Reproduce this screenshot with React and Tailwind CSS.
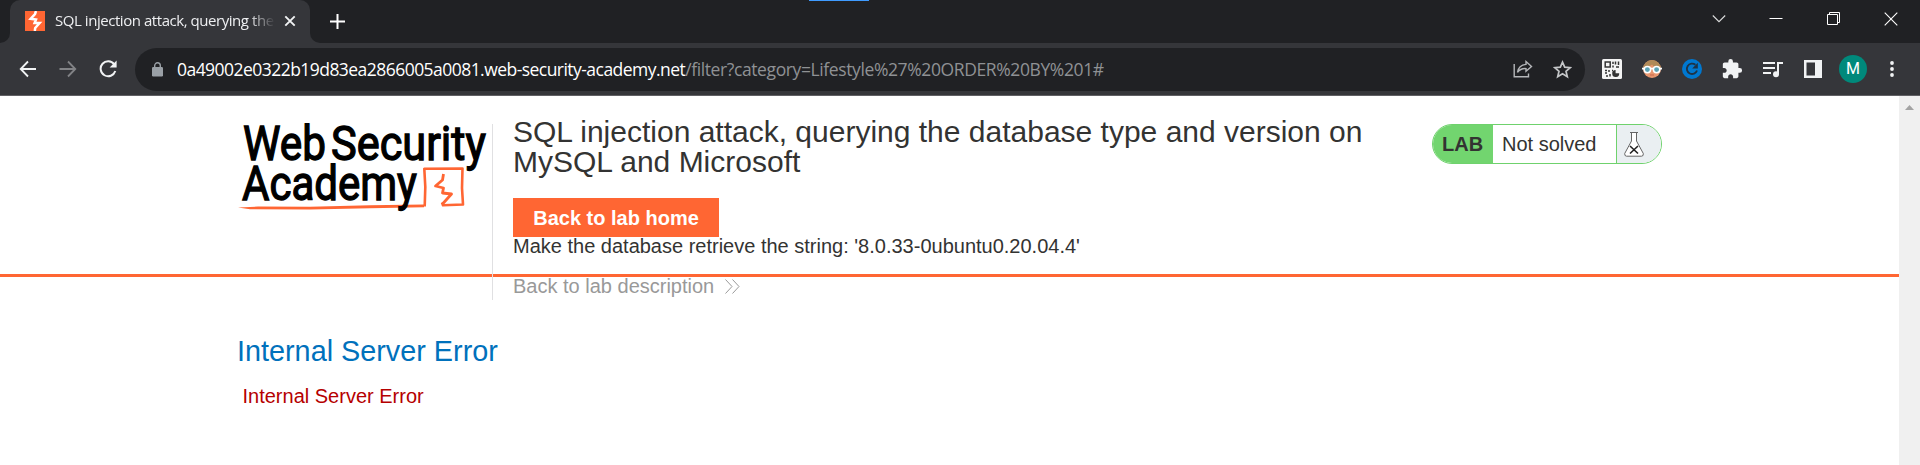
const chromeFont = "font-['Open_Sans','Noto_Sans',sans-serif]";

function Bolt({ className }) {
  return (
    <svg className={className} viewBox="0 0 20 20">
      <rect width="20" height="20" fill="#ff6633" />
      <path d="M11 0 L10 3 L5.6 7.8 L11 8.6 L9.6 12 L14.6 12 L10.2 17 L9.8 20" fill="none" stroke="#fff" strokeWidth="2.5" />
    </svg>
  );
}

function TabStrip() {
  return (
    <div className="flex h-[43px] bg-[#202124] justify-between">
      <div className="flex items-end">
        <div className="h-[43px] w-[10px] bg-[#35363a]">
          <div className="h-full rounded-br-[10px] bg-[#202124]" />
        </div>
        <div className="flex h-[43px] w-[300px] items-center rounded-t-[10px] bg-[#35363a] pl-[15px] pb-px">
          <Bolt className="h-5 w-5 shrink-0" />
          <div className={`${chromeFont} -mt-[2px] ml-[10px] w-[220px] overflow-hidden whitespace-nowrap text-[15px] leading-[22px] tracking-[-0.45px] text-[#eeeff1] [mask-image:linear-gradient(to_right,#000_88%,transparent)]`}>
            SQL injection attack, querying the
          </div>
          <svg className="ml-[9px] h-3 w-3" viewBox="0 0 12 12" stroke="#f1f3f4" strokeWidth="1.9">
            <path d="M1.3 1.3 L10.7 10.7 M10.7 1.3 L1.3 10.7" />
          </svg>
        </div>
        <div className="h-[43px] w-[10px] bg-[#35363a]">
          <div className="h-full rounded-bl-[10px] bg-[#202124]" />
        </div>
        <svg className="ml-[10px] mb-[14px] h-[15px] w-[15px]" viewBox="0 0 15 15" stroke="#fff" strokeWidth="2">
          <path d="M7.5 0 V15 M0 7.5 H15" />
        </svg>
      </div>
      <div className="flex gap-[43.5px] pr-[22px] pt-[12px]">
        <svg className="h-[14px] w-[14px]" viewBox="0 0 14 14" fill="none" stroke="#dcdddd" strokeWidth="1.1">
          <path d="M0.8 3.5 L7 9.7 L13.2 3.5" />
        </svg>
        <svg className="h-[14px] w-[14px]" viewBox="0 0 14 14" fill="none" stroke="#fff">
          <path d="M0.5 6.5 H13.5" />
        </svg>
        <svg className="h-[14px] w-[14px]" viewBox="0 0 14 14" fill="none" stroke="#fff">
          <path d="M0.5 2.5 H10.5 V12.5 H0.5 Z M2.5 2.5 V0.5 H12.5 V10.5 H10.5" />
        </svg>
        <svg className="h-[14px] w-[14px]" viewBox="0 0 14 14" fill="none" stroke="#fff" strokeWidth="1.1">
          <path d="M0.7 0.7 L13.3 13.3 M13.3 0.7 L0.7 13.3" />
        </svg>
      </div>
    </div>
  );
}

function QrIcon() {
  return (
    <svg className="h-5 w-5" viewBox="0 0 20 20">
      <rect width="20" height="20" rx="1.5" fill="#f4f4f4" />
      <g fill="none" stroke="#333" strokeWidth="1.5">
        <rect x="3.2" y="3" width="5" height="5" />
        <path d="M11 2.8 V5 M11 6.5 V8.5 M13.5 2.5 V5.500 M14 8 H17 M16.5 2.5 V6 M3 11.500 H5 M7 11 V13 M3 14 H5 M4 17 H6 M8 15 V17.500 M10 11.500 H11" />
      </g>
      <path d="M13.600 11 V14.200 H17.200 A3.500 3.500 0 1 1 13.600 11 Z" fill="#333" />
    </svg>
  );
}

function FaceIcon() {
  return (
    <svg className="h-5 w-5" viewBox="0 0 20 20">
      <circle cx="10" cy="10" r="9" fill="#e8976f" />
      <path d="M1 10 A9 9 0 0 1 19 10 L13 9 L10 5.500 L5 9 Z" fill="#b08a58" />
      <path d="M0 9.600 H20" stroke="#fff" strokeWidth="1.800" />
      <circle cx="5.4" cy="10.6" r="3.2" fill="#5aa3b5" stroke="#fff" strokeWidth="1.5" />
      <circle cx="14.6" cy="10.6" r="3.2" fill="#5aa3b5" stroke="#fff" strokeWidth="1.5" />
      <path d="M8 16 H12" stroke="#c9674a" />
    </svg>
  );
}

function Toolbar() {
  return (
    <div className="flex h-[53px] items-center border-b border-[#606064] bg-[#35363a] pl-[19px]">
      <svg className="h-[18px] w-[18px]" viewBox="0 0 18 18" fill="none" stroke="#f1f3f4" strokeWidth="1.8">
        <path d="M17 9 H2 M9 1.5 L1.7 9 L9 16.5" />
      </svg>
      <svg className="ml-[22px] h-[18px] w-[18px]" viewBox="0 0 18 18" fill="none" stroke="#828386" strokeWidth="1.8">
        <path d="M0.5 9 H16 M9 1.5 L16.3 9 L9 16.5" />
      </svg>
      <svg className="ml-[22px] h-[18px] w-[18px]" viewBox="0 0 18 18" fill="none" stroke="#f1f3f4" strokeWidth="2">
        <path d="M15.2 4.3 A7.5 7.5 0 1 0 16.3 11" />
        <path d="M17.6 0.6 V7.6 H10.6 Z" fill="#f1f3f4" stroke="none" />
      </svg>
      <div className="ml-[18px] flex h-[43px] w-[1450px] items-center rounded-full bg-[#202124] pl-[17px] pr-[13px]">
        <svg className="h-[15px] w-[11px]" viewBox="0 0 11 15">
          <rect y="5" width="11" height="9.5" rx="1.2" fill="#9aa0a6" />
          <path d="M2.7 5.5 V3.6 A2.8 2.8 0 0 1 8.3 3.6 V5.5" fill="none" stroke="#9aa0a6" strokeWidth="1.4" />
        </svg>
        <div className={`${chromeFont} ml-[14px] flex-1 whitespace-nowrap text-[17.5px] leading-6 text-[#8f9194]`}>
          <span className="tracking-[-0.54px] text-white">0a49002e0322b19d83ea2866005a0081.web-security-academy.net</span>
          <span className="tracking-[-0.39px]">/filter?category=Lifestyle%27%20ORDER%20BY%201#</span>
        </div>
        <svg className="h-[18px] w-[20px]" viewBox="0 0 20 18" fill="none" stroke="#b4b6b9" strokeWidth="1.4">
          <path d="M1.2 4 V16.8 H15.5 V13.5" />
          <path d="M13 1.6 L18.5 6.5 L13 11.3 V8.6 Q7.5 8.2 4.5 12.4 Q5.6 5 13 4.4 Z" />
        </svg>
        <svg className="ml-[20px] h-[19px] w-[19px]" viewBox="0 0 19 19" fill="none" stroke="#c4c6c8" strokeWidth="1.7">
          <path d="M9.5 2.2 L11.7 7.2 L17.2 7.7 L13 11.3 L14.3 16.7 L9.5 13.8 L4.7 16.7 L6 11.3 L1.8 7.7 L7.3 7.2 Z" />
        </svg>
      </div>
      <div className="ml-[17px] flex items-center">
        <QrIcon />
        <div className="ml-5"><FaceIcon /></div>
        <svg className="ml-5 h-5 w-5" viewBox="0 0 20 20">
          <circle cx="10" cy="10" r="10" fill="#0078d0" />
          <path d="M13.4 5.8 A5.200 5.200 0 1 0 15 11.500" fill="none" stroke="#1d3346" strokeWidth="1.9" />
          <path d="M15.800 3.800 V9.400 H10.200 Z" fill="#1d3346" />
        </svg>
        <svg className="ml-[19px] h-[22px] w-[22px]" viewBox="0 0 24 24" fill="#f1f3f4">
          <path d="M20.5 11H19V7c0-1.1-.9-2-2-2h-4V3.5a2.5 2.5 0 0 0-5 0V5H4c-1.100 0-1.990.9-1.990 2v3.800H3.500c1.490 0 2.700 1.210 2.700 2.700s-1.210 2.700-2.700 2.700H2V20c0 1.100.9 2 2 2h3.800v-1.500c0-1.490 1.210-2.700 2.700-2.700 1.490 0 2.700 1.210 2.700 2.700V22H17c1.100 0 2-.9 2-2v-4h1.500a2.500 2.500 0 0 0 0-5z" />
        </svg>
        <svg className="ml-[20px] h-[17px] w-[20px]" viewBox="0 0 20 17">
          <path d="M0 2 H12 M0 7 H12 M0 12 H8" stroke="#f1f3f4" strokeWidth="2" />
          <path d="M15 13 V2 H20" fill="none" stroke="#f1f3f4" strokeWidth="2" />
          <circle cx="13" cy="13.200" r="3" fill="#f1f3f4" />
        </svg>
        <svg className="ml-[21px] h-[18px] w-[18px]" viewBox="0 0 18 18">
          <rect width="18" height="18" fill="#f1f3f4" />
          <rect x="2.500" y="2.500" width="8.500" height="13" fill="#35363a" />
        </svg>
        <div className="ml-[17px] flex h-7 w-7 items-center justify-center rounded-full bg-[#00897b] font-[Roboto,sans-serif] text-[16px] text-white">M</div>
        <svg className="ml-[23px] h-4 w-1" viewBox="0 0 4 16" fill="#f1f3f4">
          <circle cx="2" cy="2" r="1.900" /><circle cx="2" cy="8" r="1.900" /><circle cx="2" cy="14" r="1.900" />
        </svg>
      </div>
    </div>
  );
}

function Logo() {
  return (
    <svg className="h-[110px] w-[254px]" viewBox="238 110 254 110">
      <g fill="none" stroke="#ff6633" strokeLinejoin="round">
        <path d="M238 207.500 L258 206.600 L310 206.800 L370 205.300 L424 204.400 L424 207.300 L370 208.200 L310 209.500 L250 209.200 Z" fill="#ff6633" stroke="none" />
        <path d="M424.700 206.500 L425.300 187 L424.300 168.800 L462.500 168.500 L462 188 L463 204.500 L443 205.300 L442 202.500" strokeWidth="2.600" />
        <path d="M443.500 174 L442.500 180 L435.500 186 L443.500 188 L442.500 193 L451.500 194 L442.500 204" strokeWidth="2.800" />
      </g>
      <g fontFamily="Roboto, sans-serif" fontWeight="400" fill="#000" stroke="#000" strokeWidth="1.300" fontSize="47.500">
        <text x="243" y="159.500" textLength="83" lengthAdjust="spacingAndGlyphs">Web</text>
        <text x="331" y="159.500" textLength="155" lengthAdjust="spacingAndGlyphs">Security</text>
        <text x="242" y="200.300" textLength="175" lengthAdjust="spacingAndGlyphs">Academy</text>
      </g>
    </svg>
  );
}

function LabStatus() {
  return (
    <div className="mt-[28px] flex h-[40px] w-[230px] overflow-hidden rounded-full border border-[#6fd26d] bg-white text-[20px] leading-[38px] text-[#333332]">
      <div className="w-[60px] bg-[#72d56f] pl-[9px] font-bold">LAB</div>
      <div className="w-[124px] border-r border-[#6fd26d] pl-[9px]">Not solved</div>
      <div className="flex-1 bg-[#eaeff2] pl-[7px] pt-[6px]">
        <svg className="h-[26px] w-[20px]" viewBox="0 0 20 26" fill="#fff" stroke="#666" strokeWidth="1">
          <path d="M6 1.500 H14 M7.500 1.500 V10 L0.700 22.500 Q0.500 25.200 2.500 25.200 H17.500 Q19.700 25.200 19.300 22.500 L12.500 10 V1.500" />
          <path d="M6 15 L14 22.500 M14 15 L6 22.500" stroke="#222" strokeWidth="1.600" />
        </svg>
      </div>
    </div>
  );
}

function LabHeader() {
  return (
    <header className="flex h-[181px] border-b-[3px] border-[#ff6633] pl-[238px]">
      <div className="h-[204px] w-[255px] shrink-0 pt-[14px]"><Logo /></div>
      <div className="relative -ml-px mt-[28px] h-[176px] w-px shrink-0 bg-[#e0e0e2]" />
      <div className="relative ml-[20px] w-[919px] shrink-0 pt-[21px] text-[20px] leading-[22px] text-[#333332]">
        <h2 className="h-[60px] w-[880px] text-[30px] leading-[30px]">SQL injection attack, querying the database type and version on MySQL and Microsoft</h2>
        <a className="mt-[21px] flex h-[39px] w-[206px] items-center justify-center bg-[#ff6633] font-bold text-white">Back to lab home</a>
        <p className="-mt-[2px]">Make the database retrieve the string: '8.0.33-0ubuntu0.20.04.4'</p>
        <a className="mt-[18px] flex items-center text-[#999999]">
          Back to lab description
          <svg className="ml-[11px] h-[15px] w-[15px]" viewBox="0 0 15 15" fill="none" stroke="#999999">
            <path d="M0.500 0.500 L7 7.500 L0.500 14.500 M7.500 0.500 L14 7.500 L7.500 14.500" />
          </svg>
        </a>
      </div>
      <LabStatus />
    </header>
  );
}

export default function App() {
  return (
    <div className="flex h-[465px] w-[1920px] flex-col overflow-hidden bg-white">
      <div className="relative">
        <TabStrip />
        <div className="absolute left-[809px] top-0 h-px w-[60px] bg-[#3f9bff]" />
      </div>
      <Toolbar />
      <div className="flex flex-1">
        <main className="w-[1899px] font-['Liberation_Sans',Arial,sans-serif]">
          <LabHeader />
          <h4 className="pl-[237px] pt-[57px] text-[28.8px] leading-[34px] text-[#0071bc]">Internal Server Error</h4>
          <p className="pl-[242.5px] pt-[17px] text-[20px] leading-[22px] text-[#b50000]">Internal Server Error</p>
        </main>
        <div className="flex w-[21px] justify-center bg-[#f0f0f0] pt-[9px]">
          <svg className="h-[5px] w-[9px]" viewBox="0 0 9 5"><path d="M0 5 L4.500 0 L9 5 Z" fill="#a3a3a3" /></svg>
        </div>
      </div>
    </div>
  );
}
